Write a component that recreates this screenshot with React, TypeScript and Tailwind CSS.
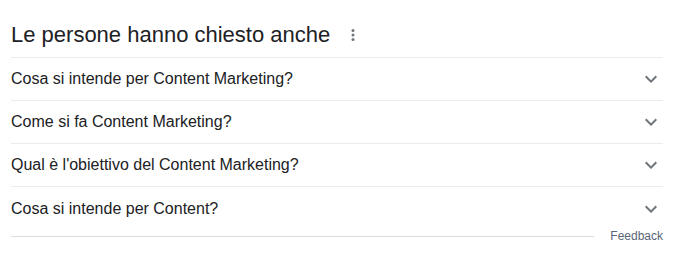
const QUESTIONS = [
  "Cosa si intende per Content Marketing?",
  "Come si fa Content Marketing?",
  "Qual è l'obiettivo del Content Marketing?",
  "Cosa si intende per Content?",
];

function Chevron() {
  return (
    <svg viewBox="0 0 24 24" className="w-6 h-6 shrink-0 fill-[#70757a]">
      <path d="M16.59 8.59L12 13.17 7.41 8.59 6 10l6 6 6-6z" />
    </svg>
  );
}

function MoreVert() {
  return (
    <svg viewBox="0 0 24 24" className="w-[18px] h-[18px] fill-[#70757a]">
      <circle cx="12" cy="6" r="2" />
      <circle cx="12" cy="12" r="2" />
      <circle cx="12" cy="18" r="2" />
    </svg>
  );
}

export default function App() {
  return (
    <div className="w-[694px] h-[261px] bg-white font-['Liberation_Sans',Arial,sans-serif] text-[#202124]">
      <div className="ml-[11px] w-[652px]">
        {/* header */}
        <div className="flex items-center gap-[14px] pt-[21px] pb-2 border-b border-[#ebebeb]">
          <h2 className="text-[22px] leading-[28px] font-normal">Le persone hanno chiesto anche</h2>
          <MoreVert />
        </div>

        {QUESTIONS.map((q, i) => (
          <div
            key={q}
            className={`flex items-center justify-between h-[43px] ${
              i < QUESTIONS.length - 1 ? "border-b border-[#ebebeb]" : ""
            }`}
          >
            <span className="text-[16px] leading-[20px]">{q}</span>
            <Chevron />
          </div>
        ))}

        {/* feedback */}
        <div className="flex items-center gap-4 h-4 -mt-[2px]">
          <div className="flex-1 border-t border-[#dadce0]" />
          <span className="text-[12px] leading-4 text-[#5a6577]">Feedback</span>
        </div>
      </div>
    </div>
  );
}
